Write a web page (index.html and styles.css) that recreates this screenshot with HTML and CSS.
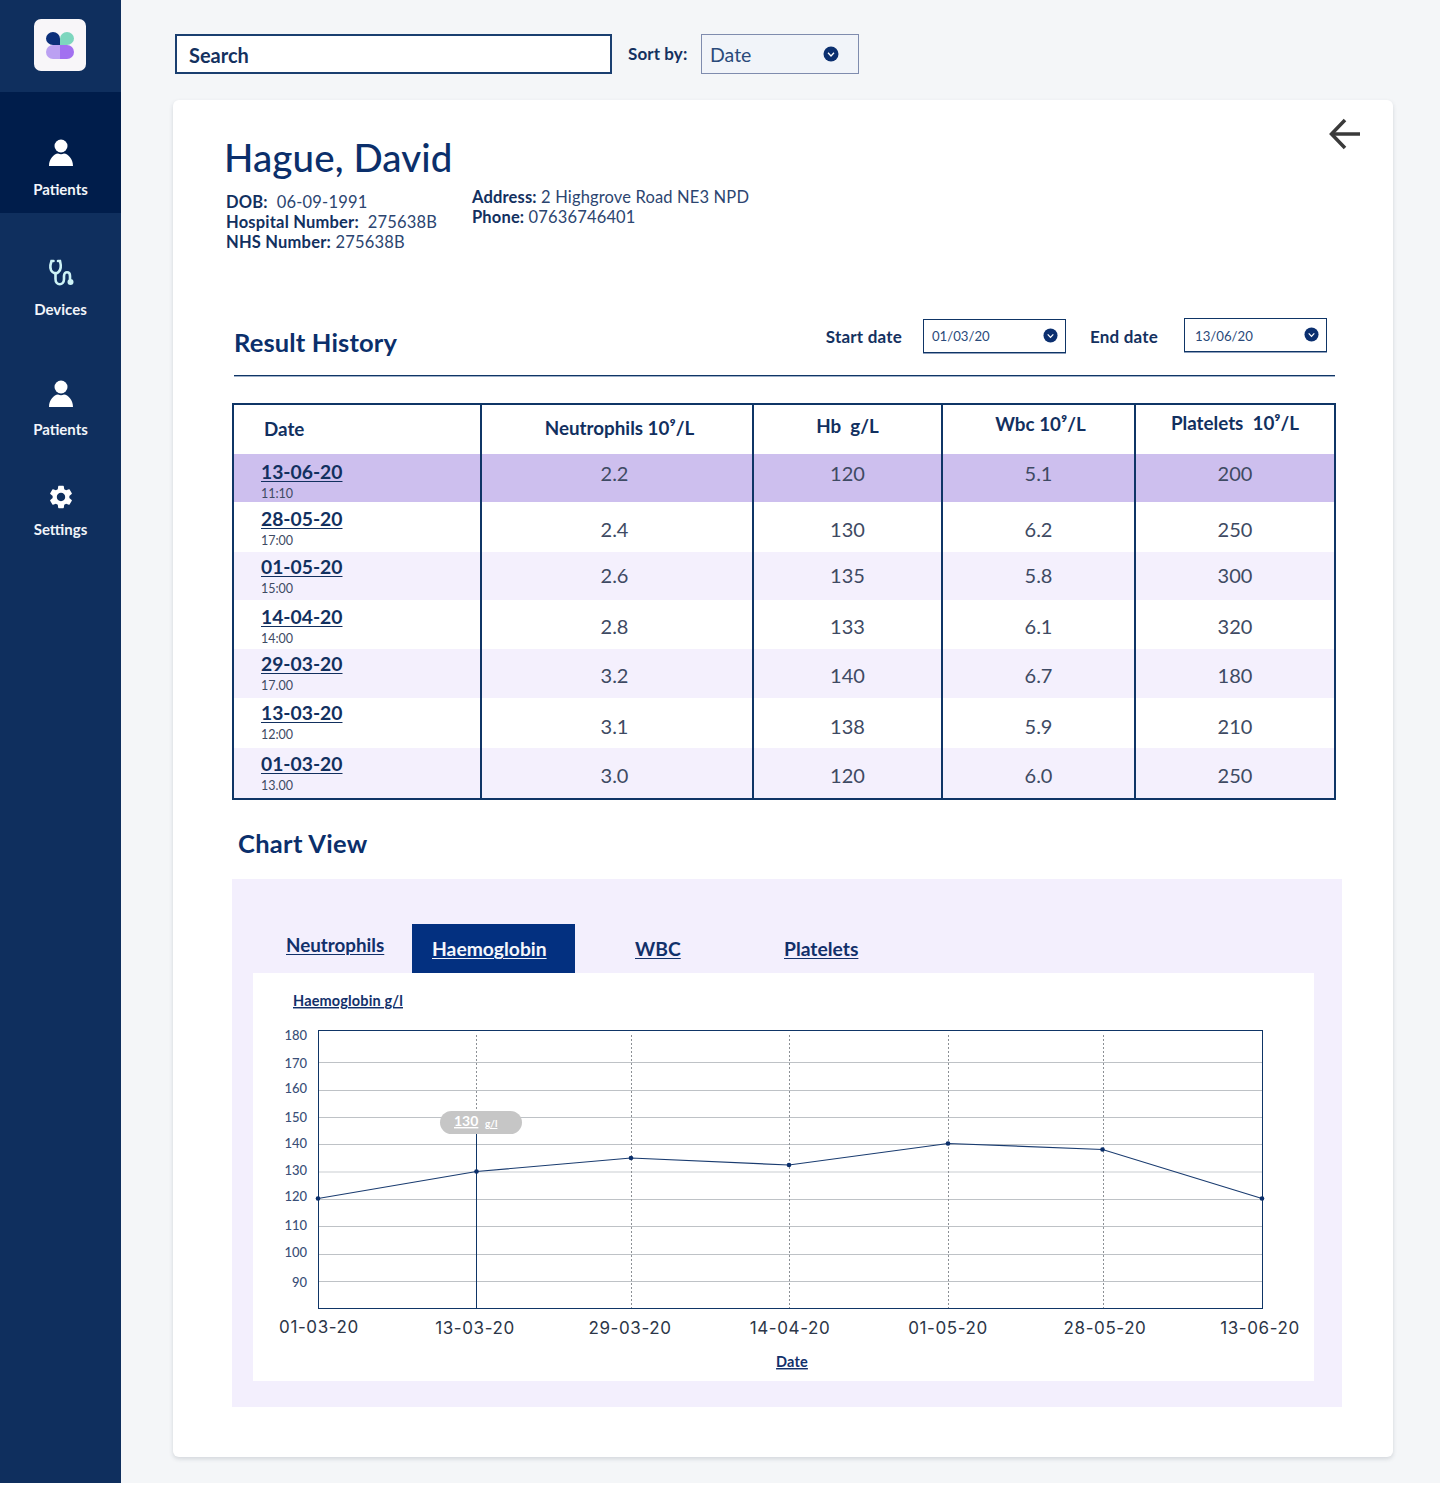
FILE: index.html
```html
<!DOCTYPE html>
<html lang="en">
<head>
<meta charset="utf-8">
<title>Hague, David</title>
<link rel="stylesheet" href="styles.css">
</head>
<body>
<div class="app">
  <aside class="sidebar">
    <div class="logo-area">
      <div class="logo">
        <svg width="28" height="27" viewBox="0 0 28 27">
          <path d="M14 13H7A7 6.5 0 1 1 14 6.500Z" fill="#0B2F7A"/>
          <path d="M14 13H21A7 6.500 0 1 0 14 6.500Z" fill="#7DD6BE"/>
          <path d="M14 13H7A7 7 0 0 0 7 27H14Z" fill="#BBA0F2"/>
          <path d="M14 13H21A7 7 0 0 1 21 27H14Z" fill="#A270F0"/>
        </svg>
      </div>
    </div>
    <nav class="nav">
      <a class="nav-item active">
        <svg class="nav-icon" viewBox="0 0 28 30"><circle cx="14" cy="8" r="6.500" fill="#fff"/><path d="M2 28C2 20.500 7 16 11 15.500C13 16.500 15 16.500 17 15.500C21 16 26 20.500 26 28Z" fill="#fff"/></svg>
        <span class="nav-label">Patients</span>
      </a>
      <a class="nav-item devices">
        <svg class="nav-icon" viewBox="0 0 28 30" fill="none" stroke="#CDF3F6" stroke-width="2.600" stroke-linecap="round"><path d="M6.500 4H4.500C2.800 9 3 13 5.500 15C7.500 16.500 10 16.500 11.500 15C14 13 14.300 9 13 4H11"/><path d="M8.500 16V22C8.500 29 17 29 17 22V19C17 14 23 14 23 19V22"/><circle cx="23.500" cy="25" r="3" fill="#CDF3F6" stroke="none"/></svg>
        <span class="nav-label">Devices</span>
      </a>
      <a class="nav-item patients2">
        <svg class="nav-icon" viewBox="0 0 28 30"><circle cx="14" cy="8" r="6.500" fill="#fff"/><path d="M2 28C2 20.500 7 16 11 15.500C13 16.500 15 16.500 17 15.500C21 16 26 20.500 26 28Z" fill="#fff"/></svg>
        <span class="nav-label">Patients</span>
      </a>
      <a class="nav-item settings">
        <svg class="nav-icon" viewBox="0 0 24 24"><path fill="#fff" fill-rule="evenodd" d="M19.140 12.940c.04-.3.06-.61.06-.94 0-.32-.02-.64-.07-.94l2.030-1.580c.18-.14.23-.41.12-.61l-1.920-3.320c-.12-.22-.37-.29-.59-.22l-2.390.96c-.5-.38-1.030-.7-1.620-.94l-.36-2.540c-.04-.24-.24-.41-.48-.41h-3.840c-.24 0-.43.17-.47.41l-.36 2.540c-.59.24-1.130.57-1.620.94l-2.390-.96c-.22-.08-.47 0-.59.22L2.740 8.870c-.12.21-.08.47.12.61l2.030 1.580c-.05.3-.09.63-.09.94s.02.64.07.94l-2.030 1.580c-.18.14-.23.41-.12.61l1.920 3.320c.12.22.37.29.59.22l2.390-.96c.5.38 1.030.7 1.620.94l.36 2.540c.05.24.24.41.48.41h3.840c.24 0 .44-.17.47-.41l.36-2.540c.59-.24 1.130-.56 1.620-.94l2.390.96c.22.08.47 0 .59-.22l1.920-3.320c.12-.22.07-.47-.12-.61l-2.010-1.580zM12 15.600c-1.980 0-3.600-1.620-3.600-3.600s1.620-3.600 3.600-3.600 3.600 1.620 3.600 3.600-1.620 3.600-3.600 3.600z"/></svg>
        <span class="nav-label">Settings</span>
      </a>
    </nav>
  </aside>

  <main class="main">
    <div class="toolbar">
      <div class="search">Search</div>
      <span class="sort-label">Sort by:</span>
      <div class="sort-select">
        <span>Date</span>
        <svg class="chev" viewBox="0 0 16 16"><circle cx="8" cy="8" r="7.500" fill="#0B2F6F"/><path d="M5 6.800L8 10L11 6.800" fill="none" stroke="#fff" stroke-width="1.300"/></svg>
      </div>
    </div>

    <section class="card">
      <svg class="back" viewBox="0 0 32 32" fill="none" stroke="#3A3A3A" stroke-width="3.500"><path d="M31 16H3"/><path d="M16 2L2.500 16L16 30"/></svg>
      <h1 class="name">Hague, David</h1>
      <div class="details">
        <div class="details-col">
          <p><b>DOB:</b>&nbsp; 06-09-1991</p>
          <p><b>Hospital Number:</b>&nbsp; 275638B</p>
          <p><b>NHS Number:</b> 275638B</p>
        </div>
        <div class="details-col second">
          <p><b>Address:</b> 2 Highgrove Road NE3 NPD</p>
          <p><b>Phone:</b> 07636746401</p>
        </div>
      </div>

      <div class="history-head">
        <h2 class="section-title">Result History</h2>
        <div class="range">
          <span class="range-label">Start date</span>
          <div class="date-input start"><span>01/03/20</span><svg class="chev small" viewBox="0 0 16 16"><circle cx="8" cy="8" r="7.500" fill="#0B2F6F"/><path d="M5 6.800L8 10L11 6.800" fill="none" stroke="#fff" stroke-width="1.300"/></svg></div>
          <span class="range-label end-label">End date</span>
          <div class="date-input end"><span>13/06/20</span><svg class="chev small" viewBox="0 0 16 16"><circle cx="8" cy="8" r="7.500" fill="#0B2F6F"/><path d="M5 6.800L8 10L11 6.800" fill="none" stroke="#fff" stroke-width="1.300"/></svg></div>
        </div>
      </div>

      <table class="results">
        <colgroup><col class="c1"><col class="c2"><col class="c3"><col class="c4"><col class="c5"></colgroup>
        <thead>
          <tr>
            <th class="h-date">Date</th>
            <th class="h-neu">Neutrophils 10⁹/L</th>
            <th class="h-hb">Hb&nbsp; g/L</th>
            <th class="h-wbc">Wbc 10⁹/L</th>
            <th class="h-plt">Platelets&nbsp; 10⁹/L</th>
          </tr>
        </thead>
        <tbody>
          <tr class="selected"><td class="d"><a class="date-link">13-06-20</a><small>11:10</small></td><td class="neu">2.2</td><td>120</td><td>5.1</td><td>200</td></tr>
          <tr><td class="d"><a class="date-link">28-05-20</a><small>17:00</small></td><td class="neu">2.4</td><td>130</td><td>6.2</td><td>250</td></tr>
          <tr><td class="d"><a class="date-link">01-05-20</a><small>15:00</small></td><td class="neu">2.6</td><td>135</td><td>5.8</td><td>300</td></tr>
          <tr><td class="d"><a class="date-link">14-04-20</a><small>14:00</small></td><td class="neu">2.8</td><td>133</td><td>6.1</td><td>320</td></tr>
          <tr><td class="d"><a class="date-link">29-03-20</a><small>17.00</small></td><td class="neu">3.2</td><td>140</td><td>6.7</td><td>180</td></tr>
          <tr><td class="d"><a class="date-link">13-03-20</a><small>12:00</small></td><td class="neu">3.1</td><td>138</td><td>5.9</td><td>210</td></tr>
          <tr><td class="d"><a class="date-link">01-03-20</a><small>13.00</small></td><td class="neu">3.0</td><td>120</td><td>6.0</td><td>250</td></tr>
        </tbody>
      </table>

      <h2 class="section-title chart-title">Chart View</h2>

      <div class="chart-panel">
        <div class="tabs">
          <a class="tab tab-neu">Neutrophils</a>
          <a class="tab tab-hb">Haemoglobin</a>
          <a class="tab tab-wbc">WBC</a>
          <a class="tab tab-plt">Platelets</a>
        </div>
        <div class="chart-box">
          <svg class="chart" viewBox="253 973 1061 408" width="1061" height="408">
            <g class="grid">
              <path d="M319 1062.500H1262M319 1090.500H1262M319 1117.500H1262M319 1144.500H1262M319 1199.500H1262M319 1226.500H1262M319 1254.500H1262M319 1281.500H1262"/>
              <path class="grid-soft" d="M319 1172H1262"/>
            </g>
            <path class="dash" d="M476.500 1035V1112M631.500 1035V1308M789.500 1035V1308M948.500 1035V1308M1103.500 1035V1308"/>
            <path class="axis-line" d="M476.500 1133V1308"/>
            <rect class="axis-line" x="318.500" y="1030.500" width="944" height="278"/>
            <polyline class="series" points="318,1198.500 476.500,1171.500 631,1158 789,1165 948,1143.500 1102.500,1149.500 1262,1198.500"/>
            <g class="dots">
              <circle cx="318" cy="1198.500" r="2.300"/><circle cx="476.500" cy="1171.500" r="2.300"/><circle cx="631" cy="1158" r="2.300"/><circle cx="789" cy="1165" r="2.300"/><circle cx="948" cy="1143.500" r="2.300"/><circle cx="1102.500" cy="1149.500" r="2.300"/><circle cx="1262" cy="1198.500" r="2.300"/>
            </g>
            <rect class="pill" x="440" y="1111" width="82" height="23" rx="11.500"/>
            <text class="pill-text" x="454" y="1126">130</text>
            <text class="pill-unit" x="485" y="1127">g/l</text>
            <g class="y-labels">
              <text x="307" y="1040">180</text><text x="307" y="1068">170</text><text x="307" y="1093">160</text><text x="307" y="1122">150</text><text x="307" y="1148">140</text><text x="307" y="1175">130</text><text x="307" y="1201">120</text><text x="307" y="1230">110</text><text x="307" y="1257">100</text><text x="307" y="1287">90</text>
            </g>
            <g class="x-labels">
              <text x="319" y="1333">01-03-20</text><text x="475" y="1334">13-03-20</text><text x="630" y="1334">29-03-20</text><text x="790" y="1334">14-04-20</text><text x="948" y="1334">01-05-20</text><text x="1105" y="1334">28-05-20</text><text x="1260" y="1334">13-06-20</text>
            </g>
            <text class="axis-title" x="293" y="1006">Haemoglobin g/l</text>
            <text class="axis-title middle" x="792" y="1367">Date</text>
          </svg>
        </div>
      </div>
    </section>
  </main>
</div>
</body>
</html>
```

FILE: styles.css
```css
* { box-sizing: border-box; }
html, body { margin: 0; padding: 0; background: #fff; }
body { font-family: "Lato", "Noto Sans", sans-serif; color: #0B2F6B; }
p, h1, h2 { margin: 0; }

.app { display: flex; width: 1440px; height: 1483px; background: #F4F6F8; }

/* Sidebar */
.sidebar { width: 121px; flex: none; background: #0F2F5E; color: #fff; }
.logo-area { height: 92px; padding: 19px 0 0 34px; }
.logo { width: 52px; height: 52px; border-radius: 7px; background: #F8F6F9; display: flex; align-items: center; justify-content: center; }
.nav { display: flex; flex-direction: column; }
.nav-item { display: flex; flex-direction: column; align-items: center; flex: none; height: 120px; padding-top: 44px; }
.nav-item.active { height: 121px; padding-top: 46px; background: #001D4B; }
.nav-item.patients2 { height: 106px; padding-top: 46px; }
.nav-item.settings { height: 100px; padding-top: 43px; }
.nav-icon { width: 28px; height: 30px; display: block; flex: none; }
.nav-label { font-size: 15px; line-height: 18px; font-weight: 700; margin-top: 12px; color: #F2F5FA; }
.devices .nav-label { margin-top: 13px; }
.patients2 .nav-label { margin-top: 11px; }
.settings .nav-label { margin-top: 8px; }

/* Main */
.main { flex: 1; padding: 34px 47px 0 52px; }
.toolbar { display: flex; align-items: center; height: 40px; margin-left: 2px; }
.search { width: 437px; height: 40px; background: #fff; border: 2px solid #1A3F70; padding-left: 12px; font-size: 20px; font-weight: 700; line-height: 38px; color: #14315F; }
.sort-label { margin-left: 16px; font-size: 17px; font-weight: 700; letter-spacing: 0.1px; color: #14315F; width: 73px; flex: none; position: relative; top: -1px; }
.sort-select { width: 158px; height: 40px; border: 1px solid #7F8CAE; background: #F1F4F9; display: flex; align-items: center; justify-content: space-between; padding: 0 19px 0 8px; font-size: 19.500px; color: #2A4A7A; }
.chev { width: 16px; height: 16px; display: block; }
.chev.small { width: 15px; height: 15px; position: relative; top: -1px; }

/* Card */
.card { position: relative; width: 1220px; height: 1357px; margin: 26px 0 0 0; background: #fff; border-radius: 6px; box-shadow: 0 2px 4px rgba(60, 70, 90, 0.18); padding: 32px 0 0 52px; }
.back { position: absolute; right: 32px; top: 18px; width: 32px; height: 32px; }
.name { font-size: 38.500px; line-height: 50px; font-weight: 500; letter-spacing: 0.1px; margin-left: -1px; color: #0B2F6B; }
.details { display: flex; margin: 3px 0 0 1px; }
.details-col { width: 246px; font-size: 16.500px; line-height: 20px; letter-spacing: 0.2px; color: #2C4570; padding-top: 7px; }
.details-col.second { width: auto; padding-top: 2px; white-space: nowrap; letter-spacing: 0.15px; }
.details-col b { font-weight: 700; color: #12305F; }

.history-head { display: flex; justify-content: space-between; width: 1101px; height: 68px; margin: 56px 0 0 9px; border-bottom: 1px solid #0F3566; box-shadow: 0 1px 0 #9FB0C8; }
.section-title { font-size: 25.500px; font-weight: 700; line-height: 32px; letter-spacing: 0.15px; color: #0B2F6B; }
.history-head .section-title { padding-top: 18px; }
.range { display: flex; align-items: flex-start; margin-right: 8px; }
.range-label { font-size: 17px; font-weight: 700; line-height: 20px; letter-spacing: 0.2px; color: #14315F; margin-top: 19px; }
.end-label { margin-left: 24px; margin-right: 26px; }
.date-input { width: 143px; height: 34px; margin-top: 10px; border: 1px solid #0F3566; box-shadow: 0 1px 0 #8fa0bd; display: flex; align-items: center; justify-content: space-between; padding: 0 7px 0 8px; font-size: 13.200px; color: #2A4A7A; }
.date-input.start { margin: 11px 0 0 21px; }
.date-input.end { padding: 1px 7px 0 10px; }

/* Table */
.results { width: 1104px; height: 397px; margin: 27px 0 0 7px; border-collapse: separate; border-spacing: 0; table-layout: fixed; border: 2px solid #0F3566; }
.c1 { width: 246px; } .c2 { width: 272px; } .c3 { width: 189px; } .c4 { width: 193px; } .c5 { width: 200px; }
th { height: 49px; padding: 0; font-size: 18.800px; font-weight: 700; color: #12305F; vertical-align: top; text-align: center; border-left: 2px solid #0F3566; }
th:first-child, td:first-child { border-left: 0; }
.h-date { text-align: left; padding: 12px 0 0 30px; }
.h-neu { padding: 11px 0 0 5px; }
.h-hb { padding: 9px 0 0; }
.h-wbc { padding: 7px 0 0 4px; }
.h-plt { padding: 6px 0 0; }
td { padding: var(--vp) 0 0; font-size: 20px; line-height: 24px; color: #3E4A63; vertical-align: top; text-align: center; border-left: 2px solid #0F3566; }
td.neu { padding-right: 5px; }
td.d { padding: var(--dp) 0 0 27px; text-align: left; }
.date-link { display: block; font-size: 19.300px; line-height: 22px; font-weight: 700; text-decoration: underline; text-underline-offset: 2px; text-decoration-thickness: 1px; color: #12305F; }
.d small { display: block; font-size: 12.500px; line-height: 14px; margin-top: 4px; color: #3E4A63; }
tbody tr:nth-child(1) { height: 48px; --vp: 7px; --dp: 7px; background: #CDBFEE; }
tbody tr:nth-child(2) { height: 50px; --vp: 15px; --dp: 6px; background: #fff; }
tbody tr:nth-child(3) { height: 48px; --vp: 11px; --dp: 4px; background: #F4F0FD; }
tbody tr:nth-child(4) { height: 49px; --vp: 14px; --dp: 6px; background: #fff; }
tbody tr:nth-child(5) { height: 49px; --vp: 14px; --dp: 4px; background: #F4F0FD; }
tbody tr:nth-child(6) { height: 50px; --vp: 16px; --dp: 4px; background: #fff; }
tbody tr:nth-child(7) { height: 50px; --vp: 15px; --dp: 5px; background: #F4F0FD; }

.chart-title { margin: 27px 0 0 13px; letter-spacing: 0.3px; }

/* Chart */
.chart-panel { width: 1110px; height: 528px; margin: 20px 0 0 7px; background: #F3EFFD; padding: 45px 28px 0 21px; }
.tabs { display: flex; height: 49px; }
.tab { font-size: 19.300px; font-weight: 700; text-decoration: underline; text-underline-offset: 2px; text-decoration-thickness: 1px; color: #12306A; white-space: nowrap; }
.tab-neu { width: 159px; padding: 9px 0 0 33px; font-size: 18.800px; }
.tab-hb { width: 163px; background: #033080; color: #F4F6FB; padding: 13px 0 0 20px; }
.tab-wbc { width: 209px; padding: 13px 0 0 60px; }
.tab-plt { padding: 13px 0 0 0; }
.chart-box { width: 1061px; height: 408px; background: #fff; }
.chart { display: block; }
.grid path { stroke: #BEC2C6; stroke-width: 1; fill: none; }
.grid .grid-soft { stroke: #E4E6E8; stroke-width: 2; }
.dash { stroke: #8C9095; stroke-width: 1; stroke-dasharray: 2 2; fill: none; }
.axis-line { stroke: #0F3566; stroke-width: 1; fill: none; }
.series { fill: none; stroke: #1A3C70; stroke-width: 1.200; }
.dots circle { fill: #0B2F6B; }
.pill { fill: #C6C6C6; }
.pill-text { font-size: 14px; font-weight: 700; fill: #fff; text-decoration: underline; }
.pill-unit { font-size: 10px; font-weight: 700; fill: #fff; text-decoration: underline; }
.y-labels text { font-size: 13px; fill: #3A4F78; text-anchor: end; font-weight: 500; }
.x-labels text { font-family: "Inter", sans-serif; font-size: 17px; letter-spacing: 0.6px; fill: #2C3648; text-anchor: middle; }
.axis-title { font-size: 14.500px; font-weight: 700; letter-spacing: 0.15px; fill: #12306A; text-decoration: underline; }
.axis-title.middle { text-anchor: middle; }
```
